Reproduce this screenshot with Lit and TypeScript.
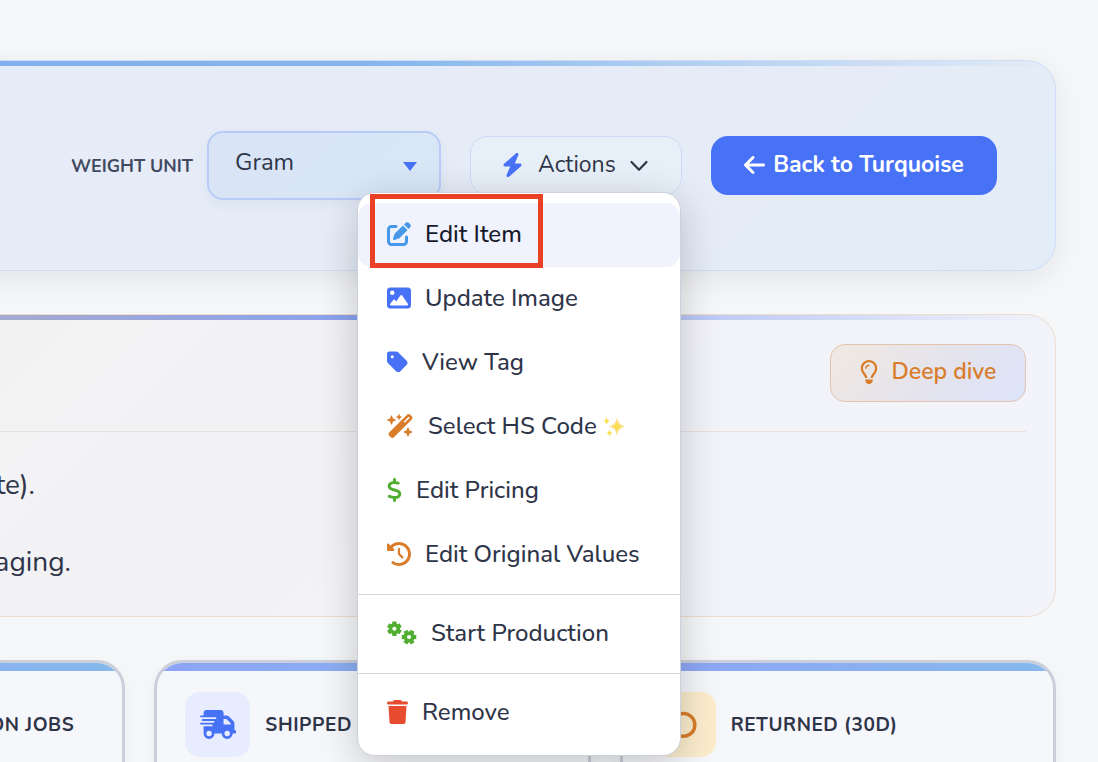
import { LitElement, html, css, svg } from "lit";
import { customElement, property } from "lit/decorators.js";

function gear(cx: number, cy: number, turn: number): string {
  const points: string[] = [];
  for (let i = 0; i < 6; i++) {
    const base = turn + i * 60;
    for (const [offset, radius] of [[-30, 118], [-21, 124], [-17, 162], [17, 162], [21, 124]]) {
      const a = ((base + offset) * Math.PI) / 180;
      points.push(`${(cx + radius * Math.cos(a)).toFixed(1)} ${(cy + radius * Math.sin(a)).toFixed(1)}`);
    }
  }
  return `M${points.join("L")}ZM${cx - 44} ${cy}a44 44 0 1 0 88 0a44 44 0 1 0 -88 0Z`;
}

const ICONS: Record<string, { w: number; d: string }> = {
  bolt: {
    w: 448,
    d: "M349.4 44.6c5.9-13.7 1.5-29.7-10.6-38.5s-28.6-8-39.9 1.8l-256 224c-10 8.8-13.6 22.9-8.9 35.3S50.7 288 64 288H175.5L98.6 467.4c-5.9 13.7-1.5 29.7 10.6 38.5s28.6 8 39.9-1.8l256-224c10-8.8 13.6-22.9 8.9-35.3s-16.6-20.7-30-20.7H272.5L349.4 44.6z",
  },
  edit: {
    w: 512,
    d: "M471.6 21.7c-21.9-21.9-57.3-21.9-79.2 0L362.3 51.7l97.9 97.9 30.1-30.1c21.9-21.9 21.9-57.3 0-79.2L471.6 21.7zm-299.2 220c-6.1 6.1-10.8 13.6-13.5 21.9l-29.6 88.8c-2.9 8.6-.6 18.1 5.8 24.6s15.9 8.7 24.6 5.8l88.8-29.6c8.2-2.7 15.7-7.4 21.9-13.5L437.7 172.3 339.7 74.3 172.4 241.7zM96 64C43 64 0 107 0 160V416c0 53 43 96 96 96H352c53 0 96-43 96-96V320c0-17.7-14.3-32-32-32s-32 14.3-32 32v96c0 17.7-14.3 32-32 32H96c-17.7 0-32-14.3-32-32V160c0-17.7 14.3-32 32-32h96c17.7 0 32-14.3 32-32s-14.3-32-32-32H96z",
  },
  image: {
    w: 512,
    d: "M0 96C0 60.7 28.7 32 64 32H448c35.3 0 64 28.7 64 64V416c0 35.3-28.7 64-64 64H64c-35.3 0-64-28.7-64-64V96zM323.8 202.5c-4.5-6.6-11.9-10.5-19.8-10.5s-15.4 3.9-19.8 10.5l-87 127.6L170.7 297c-4.6-5.7-11.5-9-18.7-9s-14.2 3.3-18.7 9l-64 80c-5.8 7.2-6.9 17.1-2.9 25.4s12.4 13.6 21.6 13.6h96 32H424c8.9 0 17.1-4.9 21.2-12.8s3.6-17.4-1.4-24.7l-120-176zM112 192a48 48 0 1 0 0-96 48 48 0 1 0 0 96z",
  },
  tag: {
    w: 448,
    d: "M0 80V229.5c0 17 6.7 33.3 18.7 45.3l176 176c25 25 65.5 25 90.5 0L418.7 317.3c25-25 25-65.5 0-90.5l-176-176c-12-12-28.3-18.7-45.3-18.7H48C21.5 32 0 53.5 0 80zm112 32a32 32 0 1 1 0 64 32 32 0 1 1 0-64z",
  },
  wand: {
    w: 576,
    d: "M234.7 42.7L197 56.8c-3 1.1-5 4-5 7.2s2 6.1 5 7.2l37.7 14.1L248.8 123c1.1 3 4 5 7.2 5s6.1-2 7.2-5l14.1-37.7L315 71.2c3-1.1 5-4 5-7.2s-2-6.1-5-7.2L277.3 42.7 263.2 5c-1.1-3-4-5-7.2-5s-6.1 2-7.2 5L234.7 42.7zM46.1 395.4c-18.7 18.7-18.7 49.1 0 67.9l34.6 34.6c18.7 18.7 49.1 18.7 67.9 0L529.9 116.5c18.7-18.7 18.7-49.1 0-67.9L495.3 14.1c-18.7-18.7-49.1-18.7-67.9 0L46.1 395.4zM484.6 82.6l-105 105-23.3-23.3 105-105 23.3 23.3zM7.5 117.2C3 118.9 0 123.2 0 128s3 9.1 7.5 10.8L64 160l21.2 56.5c1.7 4.5 6 7.5 10.8 7.5s9.1-3 10.8-7.5L128 160l56.5-21.2c4.5-1.7 7.5-6 7.5-10.8s-3-9.1-7.5-10.8L128 96 106.8 39.5C105.1 35 100.8 32 96 32s-9.1 3-10.8 7.5L64 96 7.5 117.2zm352 256c-4.5 1.7-7.5 6-7.5 10.8s3 9.1 7.5 10.8L416 416l21.2 56.5c1.7 4.5 6 7.5 10.8 7.5s9.1-3 10.8-7.5L480 416l56.5-21.2c4.5-1.7 7.5-6 7.5-10.8s-3-9.1-7.5-10.8L480 352l-21.2-56.5c-1.7-4.5-6-7.5-10.8-7.5s-9.1 3-10.8 7.5L416 352l-56.5 21.2z",
  },
  dollar: {
    w: 320,
    d: "M160 0c17.7 0 32 14.3 32 32V67.7c1.6 .2 3.1 .4 4.7 .7c.4 .1 .7 .1 1.1 .2l48 8.8c17.4 3.2 28.9 19.9 25.7 37.2s-19.9 28.9-37.2 25.7l-47.5-8.7c-31.3-4.6-58.9-1.5-78.3 6.2s-27.2 18.3-29 28.1c-2 10.7-.5 16.7 1.2 20.4c1.8 3.9 5.5 8.3 12.8 13.2c16.3 10.7 41.3 17.7 73.7 26.3l2.9 .8c28.6 7.6 63.6 16.8 89.6 33.8c14.2 9.3 27.6 21.9 35.9 39.5c8.5 17.9 10.3 37.9 6.4 59.2c-6.9 38-33.1 63.4-65.6 76.7c-13.7 5.6-28.6 9.2-44.4 11V480c0 17.7-14.3 32-32 32s-32-14.3-32-32V445.1c-.4-.1-.9-.1-1.3-.2l-.2 0 0 0c-24.4-3.8-64.5-14.3-91.5-26.3c-16.1-7.2-23.4-26.1-16.2-42.2s26.1-23.4 42.2-16.2c20.9 9.3 55.3 18.5 75.2 21.6c31.9 4.7 58.2 2 76-5.3c16.9-6.9 24.6-16.9 26.8-28.9c1.9-10.6 .4-16.7-1.3-20.4c-1.9-4-5.6-8.4-13-13.3c-16.4-10.7-41.5-17.7-74-26.3l-2.8-.7 0 0C119.4 279.3 84.4 270 58.4 253c-14.2-9.3-27.5-22-35.8-39.6c-8.4-17.9-10.1-37.9-6.1-59.2C23.7 116 52.3 91.2 84.8 78.3c13.3-5.3 27.9-8.9 43.2-11V32c0-17.7 14.3-32 32-32z",
  },
  history: {
    w: 512,
    d: "M75 75L41 41C25.9 25.9 0 36.6 0 57.9V168c0 13.3 10.7 24 24 24H134.1c21.4 0 32.1-25.9 17-41l-30.8-30.8C155 85.5 203 64 256 64c106 0 192 86 192 192s-86 192-192 192c-40.8 0-78.6-12.7-109.7-34.4c-14.5-10.1-34.4-6.6-44.6 7.9s-6.6 34.4 7.9 44.6C151.2 495 201.7 512 256 512c141.4 0 256-114.6 256-256S397.4 0 256 0C185.3 0 121.3 28.7 75 75zm181 53c-13.3 0-24 10.7-24 24V256c0 6.4 2.5 12.5 7 17l72 72c9.4 9.4 24.6 9.4 33.9 0s9.4-24.6 0-33.9l-65-65V152c0-13.3-10.7-24-24-24z",
  },
  gears: { w: 640, d: gear(158, 166, 30) + gear(470, 342, 0) },
  trash: {
    w: 448,
    d: "M135.2 17.7L128 32H32C14.3 32 0 46.3 0 64S14.3 96 32 96H416c17.7 0 32-14.3 32-32s-14.3-32-32-32H320l-7.2-14.3C307.4 6.8 296.3 0 284.2 0H163.8c-12.1 0-23.2 6.8-28.6 17.7zM416 128H32L53.2 467c1.6 25.3 22.6 45 47.9 45H346.9c25.3 0 46.3-19.7 47.9-45L416 128z",
  },
  back: {
    w: 448,
    d: "M9.4 233.4c-12.5 12.5-12.5 32.8 0 45.3l160 160c12.5 12.5 32.8 12.5 45.3 0s12.5-32.8 0-45.3L109.2 288 416 288c17.7 0 32-14.3 32-32s-14.3-32-32-32l-306.7 0L214.6 118.6c12.5-12.5 12.5-32.8 0-45.3s-32.8-12.5-45.3 0l-160 160z",
  },
  bulb: {
    w: 384,
    d: "M297.2 248.9C311.6 228.3 320 203.2 320 176c0-70.7-57.3-128-128-128S64 105.3 64 176c0 27.2 8.4 52.3 22.8 72.9c3.7 5.3 8.1 11.3 12.8 17.7c12.9 17.7 28.3 38.9 39.8 59.8c10.4 19 15.7 38.8 18.3 57.5H109c-2.2-12-5.9-23.7-11.8-34.5c-9.9-18-22.2-34.9-34.5-51.8c-5.2-7.1-10.4-14.2-15.4-21.4C27.6 247.9 16 213.3 16 176C16 78.8 94.8 0 192 0s176 78.8 176 176c0 37.3-11.6 71.9-31.4 100.3c-5 7.2-10.2 14.3-15.4 21.4c-12.3 16.8-24.6 33.7-34.5 51.8c-5.9 10.8-9.6 22.5-11.8 34.5H226.4c2.6-18.7 7.9-38.6 18.3-57.5c11.5-20.9 26.9-42.1 39.8-59.8c4.7-6.4 9-12.4 12.7-17.7zM192 128c-26.5 0-48 21.5-48 48c0 8.8-7.2 16-16 16s-16-7.2-16-16c0-44.2 35.8-80 80-80c8.8 0 16 7.2 16 16s-7.2 16-16 16zm0 384c-44.2 0-80-35.8-80-80V416H272v16c0 44.2-35.8 80-80 80z",
  },
  truck: {
    w: 640,
    d: "M112 0C85.5 0 64 21.5 64 48V96H16c-8.8 0-16 7.2-16 16s7.2 16 16 16H64 272c8.8 0 16 7.2 16 16s-7.2 16-16 16H64 48c-8.8 0-16 7.2-16 16s7.2 16 16 16H64 240c8.8 0 16 7.2 16 16s-7.2 16-16 16H64 16c-8.8 0-16 7.2-16 16s7.2 16 16 16H64 208c8.8 0 16 7.2 16 16s-7.2 16-16 16H64V416c0 53 43 96 96 96s96-43 96-96H384c0 53 43 96 96 96s96-43 96-96h32c17.7 0 32-14.3 32-32s-14.3-32-32-32V288 256 237.3c0-17-6.7-33.3-18.7-45.3L512 114.7c-12-12-28.3-18.7-45.3-18.7H416V48c0-26.5-21.5-48-48-48H112zM544 237.3V256H416V160h50.7L544 237.3zM160 368a48 48 0 1 1 0 96 48 48 0 1 1 0-96zm272 48a48 48 0 1 1 96 0 48 48 0 1 1 -96 0z",
  },
};

@customElement("ui-icon")
class UiIcon extends LitElement {
  @property() name = "";

  static styles = css`
    :host {
      display: block;
      flex: none;
      height: 24px;
    }
    .glyph {
      display: block;
      height: 100%;
      width: auto;
      fill: currentColor;
      fill-rule: evenodd;
    }
    .line {
      fill: none;
      stroke: currentColor;
      stroke-linecap: round;
      stroke-linejoin: round;
    }
    .spark {
      fill: #f9e3a0;
    }
    .spark-core {
      fill: #fade55;
    }
  `;

  render() {
    if (this.name === "chevron") {
      return html`<svg class="glyph" viewBox="0 0 24 24" aria-hidden="true">
        ${svg`<path class="line" stroke-width="2.2" d="M4.500 9L12 16.800L19.500 9"/>`}
      </svg>`;
    }
    if (this.name === "return") {
      return html`<svg class="glyph" viewBox="0 0 28 28" aria-hidden="true">
        ${svg`<path class="line" stroke-width="3.4" d="M3 4V10H9M4 9.5A11 11 0 1 1 3.500 18"/>`}
      </svg>`;
    }
    if (this.name === "sparkles") {
      return html`<svg class="glyph" viewBox="0 0 24 24" aria-hidden="true">
        ${svg`<path class="spark" d="M14 2.500Q15 11 22.500 12.500Q15 14 14 22.500Q13 14 5.500 12.500Q13 11 14 2.500Z"/>
        <path class="spark-core" d="M14 6Q14.800 11.800 19.500 12.500Q14.800 13.200 14 19Q13.200 13.200 8.500 12.500Q13.200 11.800 14 6Z"/>
        <path class="spark-core" d="M3.500 3Q4 6.300 7 7Q4 7.700 3.500 11.500Q3 7.700 .5 7Q3 6.300 3.500 3ZM6.500 15.500Q7 18.400 9.500 19Q7 19.600 6.500 23Q6 19.600 3.500 19Q6 18.400 6.500 15.500Z"/>`}
      </svg>`;
    }
    const icon = ICONS[this.name];
    return html`<svg class="glyph" viewBox="0 0 ${icon.w} 512" aria-hidden="true">
      ${svg`<path d=${icon.d}/>`}
    </svg>`;
  }
}

interface MenuEntry {
  icon: string;
  tone: string;
  label: string;
  active?: boolean;
  sparkle?: boolean;
}

const GROUPS: MenuEntry[][] = [
  [
    { icon: "edit", tone: "sky", label: "Edit Item", active: true },
    { icon: "image", tone: "blue", label: "Update Image" },
    { icon: "tag", tone: "blue", label: "View Tag" },
    { icon: "wand", tone: "orange", label: "Select HS Code", sparkle: true },
    { icon: "dollar", tone: "green", label: "Edit Pricing" },
    { icon: "history", tone: "orange", label: "Edit Original Values" },
  ],
  [{ icon: "gears", tone: "green", label: "Start Production" }],
  [{ icon: "trash", tone: "red", label: "Remove" }],
];

@customElement("app-root")
class AppRoot extends LitElement {
  static styles = css`
    :host {
      display: block;
      height: 100vh;
      overflow: hidden;
      background: #f6f7f9;
      color: #2f3549;
      font-family: Nunito, Lato, "Open Sans", sans-serif;
      font-size: 24px;
      line-height: 32px;
    }
    * {
      box-sizing: border-box;
    }
    button,
    select {
      font: inherit;
      color: inherit;
      margin: 0;
    }
    .page {
      display: flex;
      flex-direction: column;
      gap: 43px;
      padding: 60px 42px 0 0;
      margin-left: -311px;
    }
    .panel {
      position: relative;
      border: 1px solid;
      border-radius: 29px;
    }
    .strip {
      position: absolute;
      inset: 0;
      border-radius: 28px;
      background-repeat: no-repeat;
      background-size: 100% 5px;
      pointer-events: none;
    }
    .toolbar {
      z-index: 2;
      display: flex;
      align-items: center;
      justify-content: flex-end;
      gap: 29px;
      padding: 70px 58px;
      border-color: #cfdcf8;
      background: linear-gradient(135deg, #e6edf8, #e5ecf7 75%, #e2edf7);
      box-shadow: 0 8px 32px rgba(0, 0, 0, 0.08);
    }
    .toolbar .strip {
      background-image: linear-gradient(90deg, #80aaef, #84b6ec 50%, rgba(132, 190, 236, 0));
    }
    .unit {
      display: flex;
      align-items: center;
      gap: 14px;
    }
    .unit-label {
      font-size: 18px;
      font-weight: 700;
      color: #434960;
    }
    .unit-field {
      position: relative;
      display: flex;
    }
    .unit-select {
      appearance: none;
      width: 234px;
      height: 69px;
      padding: 0 26px 8px;
      border: 2px solid #b8cbf8;
      border-radius: 16px;
      background: linear-gradient(135deg, #d9e4f7, #d8e7f6);
      box-shadow: 0 4px 14px rgba(40, 70, 130, 0.06);
    }
    .unit-caret {
      position: absolute;
      right: 24px;
      top: 31px;
      border: 7px solid transparent;
      border-top: 9px solid #4872f6;
      border-bottom: 0;
      pointer-events: none;
    }
    .actions {
      position: relative;
    }
    .actions-button {
      display: flex;
      align-items: center;
      width: 212px;
      height: 59px;
      padding: 0 30px 2px 31px;
      border: 1px solid #cfdcf8;
      border-radius: 17px;
      background: #e7eff8;
      font-size: 23px;
    }
    .actions-button .bolt {
      color: #4872f6;
      margin-right: 15px;
    }
    .actions-button .chevron {
      margin-left: auto;
    }
    .back {
      display: flex;
      align-items: center;
      justify-content: center;
      gap: 8px;
      width: 286px;
      height: 59px;
      padding-bottom: 2px;
      border-radius: 17px;
      background: #4872f6;
      color: #fff;
      font-size: 23px;
      font-weight: 700;
      text-decoration: none;
    }
    .menu {
      position: absolute;
      z-index: 3;
      top: 56px;
      right: 1px;
      width: 324px;
      padding: 10px 0;
      border: 1px solid #cdd1de;
      border-radius: 18px;
      background: #fff;
      box-shadow: 0 10px 40px rgba(0, 0, 0, 0.2);
    }
    .group + .group {
      margin-top: 7px;
      padding-top: 7px;
      border-top: 1px solid #d4d7e2;
    }
    .entry {
      position: relative;
      display: flex;
      align-items: center;
      gap: 14px;
      width: 100%;
      height: 64px;
      padding: 0 28px 2px 29px;
      border: 0;
      border-radius: 14px;
      background: none;
      font-weight: 500;
      text-align: left;
      white-space: nowrap;
    }
    .entry.active {
      background: #f0f3fd;
      color: #161a2b;
    }
    .entry-text {
      display: flex;
      align-items: center;
      gap: 6px;
    }
    .marker {
      position: absolute;
      top: -9px;
      left: 12px;
      width: 173px;
      height: 74px;
      border: 5px solid #ea4025;
    }
    .sky { color: #4698e8; }
    .blue { color: #4872f6; }
    .orange { color: #d97d2c; }
    .green { color: #50ae31; }
    .red { color: #e84c30; }
    .insight {
      padding: 29px 29px 34px;
      border-color: #eedcce;
      background: linear-gradient(135deg, #f4f2f2, #f2f2f5 45%, #f2f3f9 65%, #f3f4fa);
    }
    .insight .strip {
      background-image: linear-gradient(90deg, #bbb0b4, #89a2f0 50%, rgba(137, 162, 245, 0));
    }
    .insight-head {
      display: flex;
      justify-content: flex-end;
      padding-bottom: 29px;
      border-bottom: 1px solid #e9e0dc;
    }
    .deep {
      display: flex;
      align-items: center;
      justify-content: center;
      gap: 14px;
      width: 196px;
      height: 58px;
      padding: 0 0 2px;
      border: 1px solid #e3c3ab;
      border-radius: 15px;
      background: linear-gradient(135deg, #f1e8e0, #e3e3ef 60%, #dde4fa);
      color: #d97d2c;
      font-size: 23px;
      font-weight: 600;
    }
    .notes {
      list-style: none;
      display: grid;
      gap: 37px;
      margin: 0;
      padding: 33px 0 0;
      font-size: 28px;
      line-height: 40px;
      white-space: nowrap;
    }
    .note {
      width: 352px;
      text-align: right;
    }
    .note.short {
      width: 316px;
    }
    .stats {
      display: grid;
      grid-template-columns: repeat(3, 1fr);
      gap: 29px;
    }
    .stat {
      position: relative;
      display: flex;
      align-items: center;
      gap: 15px;
      min-height: 210px;
      padding: 29px 28px 113px;
      border: 3px solid #cbcfdb;
      border-radius: 28px;
      background: #f6f7fa;
      box-shadow: 0 6px 24px rgba(0, 0, 0, 0.04);
      font-size: 19px;
      font-weight: 700;
      letter-spacing: 0.03em;
      white-space: nowrap;
    }
    .stat .strip {
      border-radius: 25px;
      background-image: linear-gradient(90deg, #8ea4f7, #86b9ec);
      background-size: 100% 8px;
    }
    .stat.end {
      justify-content: flex-end;
      padding-right: 48px;
    }
    .badge {
      display: grid;
      place-items: center;
      width: 65px;
      height: 65px;
      border-radius: 15px;
      background: #e7ecfe;
      color: #4872f6;
    }
    .badge.warm {
      background: #fbedcc;
      color: #d97d2c;
    }
    .badge ui-icon {
      height: 29px;
    }
  `;

  private entry(e: MenuEntry) {
    return html`<button class="entry ${e.active ? "active" : ""}" role="menuitem">
      <ui-icon class=${e.tone} name=${e.icon}></ui-icon>
      <span class="entry-text">
        ${e.label}${e.sparkle ? html`<ui-icon name="sparkles"></ui-icon>` : ""}
      </span>
      ${e.active ? html`<span class="marker"></span>` : ""}
    </button>`;
  }

  render() {
    return html`
      <main class="page">
        <header class="panel toolbar">
          <div class="strip"></div>
          <div class="unit">
            <label class="unit-label" for="unit">WEIGHT UNIT</label>
            <div class="unit-field">
              <select class="unit-select" id="unit">
                <option>Gram</option>
              </select>
              <span class="unit-caret"></span>
            </div>
          </div>
          <div class="actions">
            <button class="actions-button" aria-haspopup="menu" aria-expanded="true">
              <ui-icon class="bolt" name="bolt"></ui-icon>
              Actions
              <ui-icon class="chevron" name="chevron"></ui-icon>
            </button>
            <div class="menu" role="menu">
              ${GROUPS.map((g) => html`<div class="group">${g.map((e) => this.entry(e))}</div>`)}
            </div>
          </div>
          <a class="back" href="#"><ui-icon name="back"></ui-icon>Back to Turquoise</a>
        </header>

        <section class="panel insight">
          <div class="strip"></div>
          <div class="insight-head">
            <button class="deep"><ui-icon name="bulb"></ui-icon>Deep dive</button>
          </div>
          <ul class="notes">
            <li class="note short">te).</li>
            <li class="note">aging.</li>
          </ul>
        </section>

        <section class="stats">
          <article class="stat end">
            <div class="strip"></div>
            PRODUCTION JOBS
          </article>
          <article class="stat">
            <div class="strip"></div>
            <div class="badge"><ui-icon name="truck"></ui-icon></div>
            SHIPPED
          </article>
          <article class="stat">
            <div class="strip"></div>
            <div class="badge warm"><ui-icon name="return"></ui-icon></div>
            RETURNED (30D)
          </article>
        </section>
      </main>
    `;
  }
}
